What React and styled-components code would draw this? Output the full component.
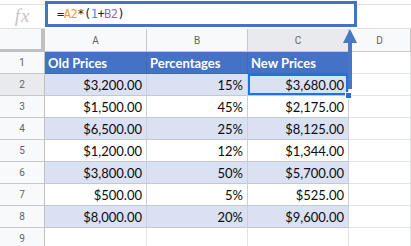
import React from "react";
import styled, { createGlobalStyle } from "styled-components";

const Global = createGlobalStyle`
  html, body { margin: 0; padding: 0; background: #ffffff; overflow: hidden; }
  * { box-sizing: border-box; }
`;

const Page = styled.div`
  position: relative;
  width: 411px;
  height: 246px;
  overflow: hidden;
  background: #ffffff;
`;

const FormulaBar = styled.div`
  display: flex;
  height: 29px;
`;

const FxCell = styled.div`
  width: 45px;
  margin-top: 4px;
  height: 25px;
  border-top: 1px solid #e0e0e0;
  border-bottom: 1px solid #e0e0e0;
  display: flex;
  align-items: center;
  justify-content: center;
  font-family: "Liberation Serif", serif;
  font-style: italic;
  font-size: 19px;
  color: #c4c4c4;
  letter-spacing: 1px;
  padding-bottom: 2px;
`;

const FormulaBox = styled.div`
  width: 312px;
  height: 26px;
  margin-top: 1px;
  border: 3px solid #4472c4;
  display: flex;
  align-items: center;
  padding-left: 9px;
  font-family: "DejaVu Sans Mono", "Liberation Mono", monospace;
  font-size: 12px;
  letter-spacing: -0.5px;
  color: #222;
`;

const Tok = styled.span`
  color: ${(p) => p.$c || "#222"};
`;

const FormulaRest = styled.div`
  flex: 1;
  margin-top: 4px;
  height: 25px;
  border-top: 1px solid #e0e0e0;
  border-bottom: 1px solid #e0e0e0;
`;

const Grid = styled.div`
  display: grid;
  grid-template-columns: 45px 102px 101px 101px 1fr;
  grid-template-rows: 23px repeat(9, 22px);
`;

const Corner = styled.div`
  background: #f8f9fa;
  border-right: 4px solid #c0c0c0;
  border-bottom: 3px solid #c0c0c0;
`;

const ColHead = styled.div`
  background: ${(p) => (p.$sel ? "#e8eaed" : "#f8f9fa")};
  border-right: 1px solid #c7c7c7;
  border-bottom: 1px solid #c7c7c7;
  display: flex;
  align-items: center;
  justify-content: center;
  font-family: Roboto, "Liberation Sans", sans-serif;
  font-size: 10px;
  color: #5f6368;
`;

const RowHead = styled.div`
  background: ${(p) => (p.$sel ? "#e8eaed" : "#f8f9fa")};
  border-right: 1px solid #c0c0c0;
  border-bottom: 1px solid #c7c7c7;
  display: flex;
  align-items: center;
  justify-content: center;
  font-family: Roboto, "Liberation Sans", sans-serif;
  font-size: 10px;
  color: #5f6368;
`;

const HeadCell = styled.div`
  background: #4472c4;
  border-right: 1px solid #3d68b5;
  border-bottom: 1px solid #3d68b5;
  display: flex;
  align-items: center;
  padding-left: 3px;
  font-family: Lato, "Liberation Sans", sans-serif;
  font-weight: 700;
  font-size: 13px;
  color: #ffffff;
`;

const Cell = styled.div`
  position: relative;
  background: ${(p) => (p.$band ? "#d9e1f2" : "#ffffff")};
  border-right: 1px solid ${(p) => (p.$table ? "#c9d0de" : "#e2e3e3")};
  border-bottom: 1px solid ${(p) => (p.$table ? "#c2c8d6" : "#e2e3e3")};
  display: flex;
  align-items: center;
  justify-content: flex-end;
  padding-right: 4px;
  font-family: Lato, "Liberation Sans", sans-serif;
  font-size: 13px;
  color: #0a0a14;
  ${(p) => p.$sel && `box-shadow: inset 0 0 0 2px #1a73e8;`}
`;

const FillHandle = styled.span`
  position: absolute;
  right: -4px;
  bottom: -4px;
  width: 7px;
  height: 7px;
  background: #1a73e8;
  border: 1px solid #ffffff;
  z-index: 2;
`;

const Arrow = styled.svg`
  position: absolute;
  left: 340px;
  top: 27px;
  z-index: 3;
  pointer-events: none;
`;

const rows = [
  ["$3,200.00", "15%", "$3,680.00"],
  ["$1,500.00", "45%", "$2,175.00"],
  ["$6,500.00", "25%", "$8,125.00"],
  ["$1,200.00", "12%", "$1,344.00"],
  ["$3,800.00", "50%", "$5,700.00"],
  ["$500.00", "5%", "$525.00"],
  ["$8,000.00", "20%", "$9,600.00"],
];

export default function App() {
  return (
    <Page>
      <Global />
      <FormulaBar>
        <FxCell>fx</FxCell>
        <FormulaBox>
          <Tok>=</Tok>
          <Tok $c="#f29b36">A2</Tok>
          <Tok>*(</Tok>
          <Tok $c="#4a86e8">1</Tok>
          <Tok>+</Tok>
          <Tok $c="#9466c9">B2</Tok>
          <Tok>)</Tok>
        </FormulaBox>
        <FormulaRest />
      </FormulaBar>
      <Grid>
        <Corner />
        <ColHead>A</ColHead>
        <ColHead>B</ColHead>
        <ColHead $sel>C</ColHead>
        <ColHead>D</ColHead>

        <RowHead>1</RowHead>
        <HeadCell>Old Prices</HeadCell>
        <HeadCell>Percentages</HeadCell>
        <HeadCell>New Prices</HeadCell>
        <Cell />

        {rows.map((r, i) => {
          const band = i % 2 === 0;
          return (
            <React.Fragment key={i}>
              <RowHead $sel={i === 0}>{i + 2}</RowHead>
              <Cell $table $band={band}>{r[0]}</Cell>
              <Cell $table $band={band}>{r[1]}</Cell>
              <Cell $table $band={band} $sel={i === 0}>
                {r[2]}
                {i === 0 && <FillHandle />}
              </Cell>
              <Cell />
            </React.Fragment>
          );
        })}

        <RowHead>9</RowHead>
        <Cell />
        <Cell />
        <Cell />
        <Cell />
      </Grid>
      <Arrow width="20" height="66" viewBox="0 0 20 66">
        <line x1="10" y1="14" x2="10" y2="62" stroke="#4a76c6" strokeWidth="4" />
        <polygon points="10,2 3,16 17,16" fill="#4a76c6" />
      </Arrow>
    </Page>
  );
}
